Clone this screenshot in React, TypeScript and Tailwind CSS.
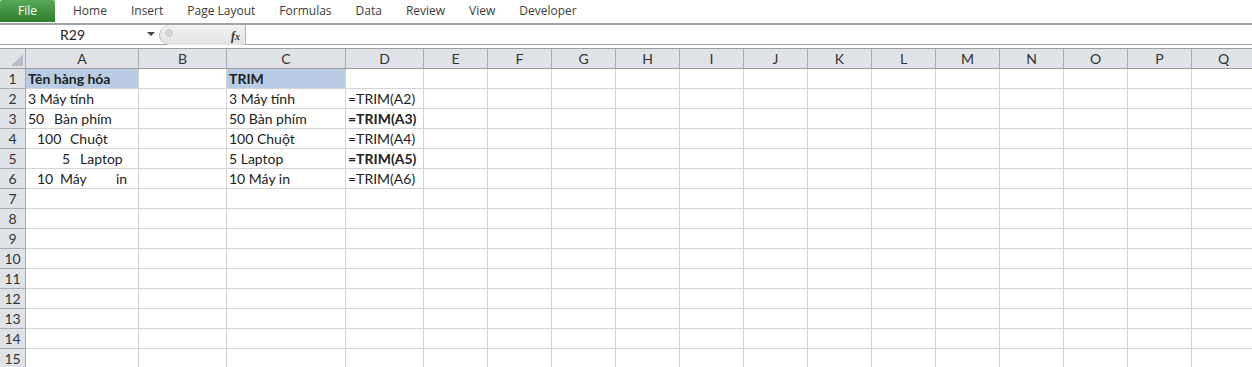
import React from "react";

type Seg = [string, number?];
type Cell = { t?: string; segs?: Seg[]; b?: boolean; sel?: boolean } | null;

const colWidths = [113, 88, 119, 78, 64, 64, 64, 64, 64, 64, 64, 64, 64, 64, 64, 64];
const letters = ["A", "B", "C", "D", "E", "F", "G", "H", "I", "J", "K", "L", "M", "N", "O", "P", "Q"];

// column A keeps the extra spaces, so each piece gets the width up to the next one
const data: Cell[][] = [
  [{ t: "Tên hàng hóa", b: true, sel: true }, null, { t: "TRIM", b: true, sel: true }, null],
  [{ t: "3 Máy tính" }, null, { t: "3 Máy tính" }, { t: "=TRIM(A2)" }],
  [{ segs: [["50", 26], ["Bàn phím"]] }, null, { t: "50 Bàn phím" }, { t: "=TRIM(A3)", b: true }],
  [{ segs: [["", 9], ["100", 33], ["Chuột"]] }, null, { t: "100 Chuột" }, { t: "=TRIM(A4)" }],
  [{ segs: [["", 34], ["5", 18], ["Laptop"]] }, null, { t: "5 Laptop" }, { t: "=TRIM(A5)", b: true }],
  [{ segs: [["", 9], ["10", 23], ["Máy", 56], ["in"]] }, null, { t: "10 Máy in" }, { t: "=TRIM(A6)" }],
];

const tabs = ["Home", "Insert", "Page Layout", "Formulas", "Data", "Review", "View", "Developer"];

export default function App() {
  const rows = Array.from({ length: 15 }, (_, i) => i + 1);

  return (
    <div className="w-[1252px] h-[367px] overflow-hidden bg-white font-['Lato',sans-serif] text-[#222]">
      {/* ribbon tabs */}
      <div className="h-[25px] flex items-start border-b-2 border-[#a3a3a3] font-['Open_Sans',sans-serif] text-[12px] text-[#3c3c3c]">
        <div className="w-[55px] h-[22px] flex items-center justify-center text-white bg-gradient-to-b from-[#5aa956] to-[#2c7d2c] rounded-t-[2px]">
          File
        </div>
        <div className="flex ml-[6px]">
          {tabs.map((t) => (
            <div key={t} className="h-[22px] px-[12px] flex items-center">
              {t}
            </div>
          ))}
        </div>
      </div>

      {/* formula bar */}
      <div className="h-[20px] flex border-b border-[#a0a0a0] text-[14px]">
        <div className="w-[159px] flex items-center">
          <span className="w-[145px] text-center">R29</span>
          <svg width="8" height="5" viewBox="0 0 8 5" className="ml-[2px]">
            <path d="M0 0 L8 0 L4 4 Z" fill="#444" />
          </svg>
        </div>
        <div className="w-[87px] h-[20px] flex items-start border-l border-r border-[#b5b5b5] rounded-l-[10px] bg-gradient-to-b from-[#f2f2f2] to-[#e2e2e2]">
          <div className="w-[8px] h-[8px] rounded-full bg-[#d6d6d6] border border-[#c8c8c8] ml-[5px] mt-[4px]" />
          <span className="ml-auto mr-[5px] mt-[2px] font-['Liberation_Serif',serif] italic font-bold text-[12px] text-[#333]">
            f<span className="text-[10px]">x</span>
          </span>
        </div>
        <div className="flex-1" />
      </div>
      <div className="h-[3px]" />

      {/* sheet */}
      <div className="border-t border-[#9e9e9e]">
        {/* column headers */}
        <div className="flex h-[20px] border-b border-[#9c9c9c] bg-[#dfe3e8] text-[14px] text-[#333]">
          <div className="w-[26px] shrink-0 border-r border-[#a9adb2] flex items-end justify-end pr-[2px] pb-[2px]">
            <svg width="12" height="12" viewBox="0 0 12 12">
              <path d="M12 0 L12 12 L0 12 Z" fill="#b7bcc2" />
            </svg>
          </div>
          {letters.map((l, i) => (
            <div
              key={l}
              style={{ width: colWidths[i] ?? 64 }}
              className="shrink-0 border-r border-[#a9adb2] flex items-center justify-center leading-none"
            >
              {l}
            </div>
          ))}
        </div>

        {rows.map((r) => (
          <div key={r} className="flex h-[20px] text-[14px]">
            <div className="w-[26px] shrink-0 bg-[#dfe3e8] border-r border-b border-[#a9adb2] text-[#333] flex items-center justify-center">
              {r}
            </div>
            {letters.map((l, ci) => {
              const cell = data[r - 1]?.[ci] ?? null;
              return (
                <div
                  key={l}
                  style={{ width: colWidths[ci] ?? 64 }}
                  className={`shrink-0 border-r border-b border-[#d4d4d4] flex items-end pl-[2px] leading-[18px] whitespace-nowrap ${
                    cell?.sel ? "bg-[#b8cce4]" : ""
                  } ${cell?.b ? "font-bold" : ""}`}
                >
                  {cell?.segs
                    ? cell.segs.map(([s, w], k) => (
                        <span key={k} className="inline-block shrink-0" style={w ? { width: w } : undefined}>
                          {s}
                        </span>
                      ))
                    : cell?.t}
                </div>
              );
            })}
          </div>
        ))}
      </div>
    </div>
  );
}
